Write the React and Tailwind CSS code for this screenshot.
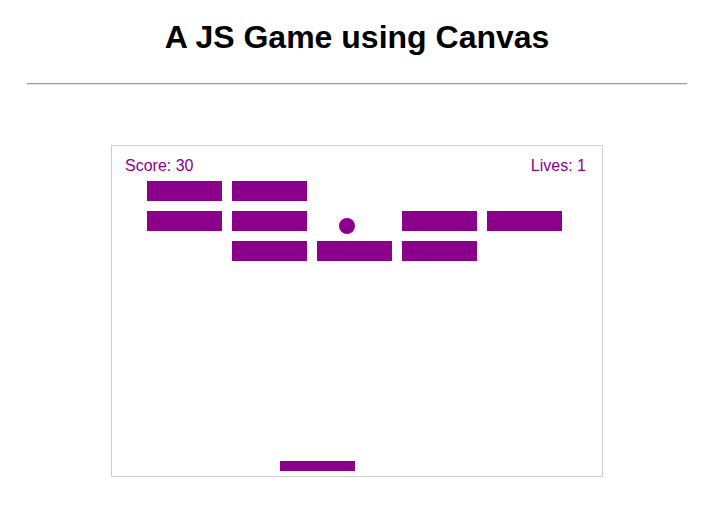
import React from 'react';

const PURPLE = 'bg-[#8b008b]';

// bricks left standing: [row, col]
const BRICKS = [
  [0, 0], [0, 1],
  [1, 0], [1, 1], [1, 3], [1, 4],
  [2, 1], [2, 2], [2, 3],
];

function GameCanvas() {
  const cells = [];
  for (let r = 0; r < 3; r++) {
    for (let c = 0; c < 5; c++) {
      const alive = BRICKS.some(([br, bc]) => br === r && bc === c);
      cells.push(
        <div key={`${r}-${c}`} className={alive ? `h-[20px] w-[75px] ${PURPLE}` : 'h-[20px] w-[75px]'} />
      );
    }
  }

  return (
    <div className="relative flex h-[332px] w-[492px] flex-col border border-[#cfcfcf] bg-white pt-[12px]">
      {/* HUD */}
      <div className="flex justify-between pl-[13px] pr-[16px] text-[16px] leading-none text-[#8b008b]">
        <span>Score: 30</span>
        <span>Lives: 1</span>
      </div>

      {/* bricks */}
      <div className="ml-[35px] mt-[7px] grid grid-cols-[repeat(5,75px)] gap-[10px]">
        {cells}
      </div>

      <div className={`absolute left-[227px] top-[72px] h-[16px] w-[16px] rounded-full ${PURPLE}`} />
      <div className={`absolute left-[168px] top-[315px] h-[10px] w-[75px] ${PURPLE}`} />
    </div>
  );
}

export default function App() {
  return (
    <div className="min-h-[511px] w-[714px] bg-white font-['Liberation_Sans',Arial,sans-serif]">
      <h1 className="pt-[19px] text-center text-[32px] font-bold leading-[37px] text-black">
        A JS Game using Canvas
      </h1>
      <div className="mx-auto mt-[27px] w-[660px] border-t border-b border-t-[#9a9a9a] border-b-[#e6e6e6]" />
      <div className="mt-[60px] flex justify-center">
        <GameCanvas />
      </div>
    </div>
  );
}
